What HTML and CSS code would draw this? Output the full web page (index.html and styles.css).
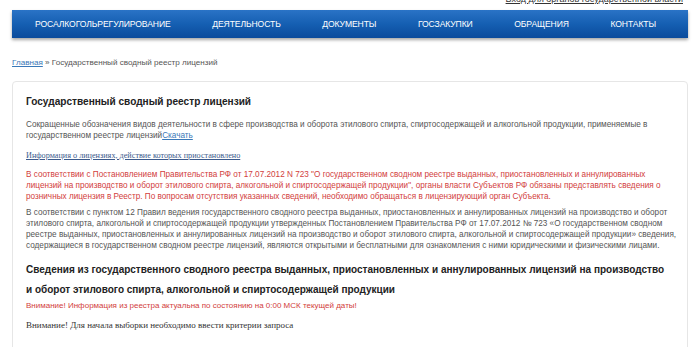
FILE: index.html
```html
<!DOCTYPE html>
<html lang="ru">
<head>
<meta charset="utf-8">
<title>Государственный сводный реестр лицензий</title>
<link rel="stylesheet" href="styles.css">
</head>
<body>
<div class="top"><a class="toplink" href="#">Вход для органов государственной власти</a></div>
<nav class="nav">
  <a href="#">РОСАЛКОГОЛЬРЕГУЛИРОВАНИЕ</a>
  <a href="#">ДЕЯТЕЛЬНОСТЬ</a>
  <a href="#">ДОКУМЕНТЫ</a>
  <a href="#">ГОСЗАКУПКИ</a>
  <a href="#">ОБРАЩЕНИЯ</a>
  <a href="#">КОНТАКТЫ</a>
</nav>
<div class="crumbs"><a href="#">Главная</a> » Государственный сводный реестр лицензий</div>
<main class="card">
  <h1 class="title">Государственный сводный реестр лицензий</h1>
  <p class="p p1">Сокращенные обозначения видов деятельности в сфере производства и оборота этилового спирта, спиртосодержащей и алкогольной продукции, применяемые в государственном реестре лицензий<a class="blue" href="#">Скачать</a></p>
  <p class="serif-link"><a href="#">Информация о лицензиях, действие которых приостановлено</a></p>
  <p class="p red">В соответствии с Постановлением Правительства РФ от 17.07.2012 N 723 "О государственном сводном реестре выданных, приостановленных и аннулированных лицензий на производство и оборот этилового спирта, алкогольной и спиртосодержащей продукции", органы власти Субъектов РФ обязаны представлять сведения о розничных лицензия в Реестр. По вопросам отсутствия указанных сведений, необходимо обращаться в лицензирующий орган Субъекта.</p>
  <p class="p gray">В соответствии с пунктом 12 Правил ведения государственного сводного реестра выданных, приостановленных и аннулированных лицензий на производство и оборот этилового спирта, алкогольной и спиртосодержащей продукции утвержденных Постановлением Правительства РФ от 17.07.2012 № 723 «О государственном сводном реестре выданных, приостановленных и аннулированных лицензий на производство и оборот этилового спирта, алкогольной и спиртосодержащей продукции» сведения, содержащиеся в государственном сводном реестре лицензий, являются открытыми и бесплатными для ознакомления с ними юридическими и физическими лицами.</p>
  <h2 class="title2">Сведения из государственного сводного реестра выданных, приостановленных и аннулированных лицензий на производство и оборот этилового спирта, алкогольной и спиртосодержащей продукции</h2>
  <p class="p red small">Внимание! Информация из реестра актуальна по состоянию на 0:00 МСК текущей даты!</p>
  <p class="serif">Внимание! Для начала выборки необходимо ввести критерии запроса</p>
</main>
</body>
</html>
```
FILE: styles.css
```css
html, body {
  margin: 0;
  padding: 0;
  background: #fff;
  font-family: "Liberation Sans", Arial, sans-serif;
  color: #555;
  overflow: hidden;
}
.top {
  height: 10px;
  display: flex;
  justify-content: flex-end;
  padding-right: 17px;
}
.toplink {
  font-size: 9px;
  line-height: 9px;
  margin-top: -5px;
  color: #333;
  text-decoration: underline;
}
.nav {
  margin: 0 12px;
  height: 28px;
  display: flex;
  align-items: center;
  justify-content: space-between;
  padding: 0 32px 0 23px;
  background: linear-gradient(to bottom, #2a73c6 0%, #155fb2 50%, #0b4b9c 100%);
  box-shadow: 0 2px 3px rgba(0,0,0,0.35);
}
.nav a {
  color: #fff;
  text-decoration: none;
  font-size: 8.6px;
  letter-spacing: -0.1px;
}
.crumbs {
  padding: 19px 12px 0;
  font-size: 8.1px;
  line-height: 12px;
  color: #555;
}
.crumbs a {
  color: #3a78b8;
  text-decoration: underline;
}
.card {
  margin: 12px 12px 0;
  border: 1px solid #e6e6e6;
  border-radius: 4px;
  padding: 12px 8px 40px 13px;
  min-height: 300px;
}
.title {
  margin: 0;
  font-size: 10.1px;
  line-height: 16px;
  font-weight: bold;
  color: #222;
}
.p {
  margin: 8.5px 0 0;
  font-size: 8.2px;
  line-height: 11px;
}
.blue {
  color: #3a78b8;
  text-decoration: underline;
}
.serif-link {
  margin: 9px 0 0;
  font-family: "Liberation Serif", "Times New Roman", serif;
  font-size: 8.2px;
  line-height: 11px;
}
.serif-link a {
  color: #3b5a8c;
  text-decoration: underline;
}
.red {
  color: #d2403d;
  margin-top: 8px;
}
.gray {
  color: #555;
  margin-top: 5px;
}
.title2 {
  margin: 9.5px 10px 0 0;
  font-size: 10px;
  line-height: 20px;
  font-weight: bold;
  color: #222;
}
.small {
  margin-top: 0;
  font-size: 8px;
}
.serif {
  margin: 9px 0 0;
  font-family: "Liberation Serif", "Times New Roman", serif;
  font-size: 9px;
  line-height: 11px;
  color: #333;
}
```
